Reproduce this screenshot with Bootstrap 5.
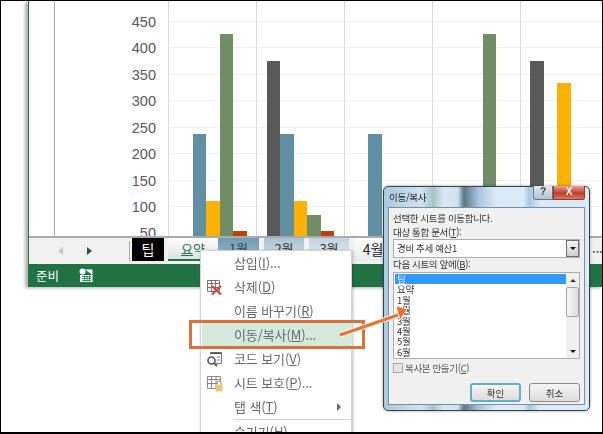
<!DOCTYPE html>
<html lang="ko">
<head>
<meta charset="utf-8">
<title>이동/복사</title>
<link href="https://cdn.jsdelivr.net/npm/bootstrap@5.3.0/dist/css/bootstrap.min.css" rel="stylesheet">
<style>
html,body{margin:0;background:#fff;}
body{font-family:"Noto Sans CJK KR","Liberation Sans",sans-serif;}
.stage{position:relative;width:603px;height:434px;overflow:hidden;background:#fff;}
.frame-line{position:absolute;inset:0;border:1px solid #000;border-bottom-width:2px;pointer-events:none;z-index:9;}
/* excel */
.xl{position:absolute;left:28px;top:1px;right:0;height:286px;border-left:1px solid #217346;box-shadow:-3px 1px 3px rgba(0,0,0,.3);background:#fff;}
.xl-chart{display:block;height:235px;width:574px;}
.xl-tabs{height:28px;background:#f1f1f1;border-top:2px solid #ababab;padding-left:29px;}
.nav-arrow{width:0;height:0;border-top:4px solid transparent;border-bottom:4px solid transparent;}
.arrow-l{border-right:5px solid #c6c6c6;}
.arrow-r{border-left:5px solid #1d5b3c;margin-left:24px;}
.tab-sep{width:1px;height:20px;background:#ababab;margin-left:37px;margin-right:2px;}
.sheet{height:23px;font-size:13px;line-height:22px;text-align:center;flex:none;color:#333;}
.sheet-on{width:32px;background:#000;color:#fff;font-size:14px;margin-right:4px;}
.sheet-sum{width:50px;background:linear-gradient(#fff,#d9e4e2);color:#2c6e52;border-bottom:2px solid #217346;}
.sheet-m{width:40px;margin-right:5px;}
.sheet-a{width:41px;background:linear-gradient(#6f9bb3,#9dbccb);color:#27475a;}
.sheet-b{background:linear-gradient(#a9c4d0,#cfe0e6);}
.sheet-c{background:linear-gradient(#c3d6dd,#dfeaee);}
.sheet-d{background:linear-gradient(#fff,#e3ecef);width:38px;color:#222;font-size:14px;}
.xl-more{position:absolute;right:0;top:240px;font-size:13px;line-height:14px;color:#333;}
.xl-status{height:23px;background:#217346;color:#fff;font-size:12.500px;padding-left:7px;line-height:23px;}
.xl-status svg{margin-left:20px;}
/* menu */
.ctx{position:absolute;left:200px;top:250px;width:152px;height:190px;background:#fff;border:1px solid #d4d4d4;border-radius:0;padding:0;min-width:0;margin:0;box-shadow:1px 1px 3px rgba(0,0,0,.25);z-index:3;filter:blur(.25px);}
.ctx .dropdown-item{height:24px;padding:0 0 0 33px;line-height:24px;color:#6a6a6a;position:relative;font-size:13px;letter-spacing:-.1px;display:flex;align-items:center;}
.ctx .dropdown-item.hot{background:#d3eadd;margin:0 0 0 1px;padding-left:32px;height:24px;}
.ctx svg.mi{position:absolute;left:5px;top:4px;}
.ctx .dropdown-divider{margin:0 0 0 32px;border-color:#d4d4d4;opacity:1;}
.caret-r{position:absolute;right:10px;top:8px;width:0;height:0;border-top:4px solid transparent;border-bottom:4px solid transparent;border-left:4px solid #666;}
u{text-underline-offset:1px;}
/* dialog */
.dlg{position:absolute;left:383px;top:186px;width:207px;height:225px;border:1px solid #3a4046;border-radius:5px;z-index:4;padding:20px 4px 5px;background:linear-gradient(90deg,#a9c9de 0,#cfe3f1 18%,#a9c2c6 24%,#d6e8f4 29%,#cfe2f0 36%,#5e7688 39%,#a6c4dc 46%,#d9ebf8 55%,#d9ebf8 68%,#a8c6de 71%,#d9ebf8 76%);box-shadow:0 0 3px rgba(0,0,0,.4);filter:blur(.35px);}
.dlg-title{position:absolute;left:5px;top:3px;font-size:9.500px;letter-spacing:-.3px;line-height:15px;color:#222;}
.cap-btns{position:absolute;right:4px;top:-1px;height:14px;}
.cap{height:14px;border:1px solid #6b7680;border-top:0;font-size:10px;line-height:12px;text-align:center;font-family:"Liberation Sans",sans-serif;font-weight:700;}
.cap-help{width:20px;border-radius:0 0 0 3px;background:linear-gradient(#dfe8ee,#b6c4cf);color:#444;}
.cap-x{width:32px;border-radius:0 0 3px 0;background:linear-gradient(#e5a396,#c13d2c 55%,#d87a66);color:#fff;border-color:#8a3a2e;}
.dlg-body{height:198px;background:#f0f0f0;border:1px solid #7d8d99;padding:3px 4px 0;font-size:9.500px;letter-spacing:-.35px;line-height:14px;color:#333;}
.dlg-body p{margin:0;}
.dlg-body p.lbl-b{line-height:13px;margin-bottom:1px;}
.combo{height:19px;background:#fff;border:1px solid #adadad;padding:0 0 0 3px;line-height:17px;}
.combo-btn{width:13px;height:17px;margin-left:auto;background:linear-gradient(#f3f3f3,#cfcfcf);border:1px solid #707070;}
.tri-d{width:0;height:0;border-left:3px solid transparent;border-right:3px solid transparent;border-top:3px solid #111;}
.tri-u{width:0;height:0;border-left:3px solid transparent;border-right:3px solid transparent;border-bottom:3px solid #333;}
.sheet-list{height:87px;background:#fff;border:1px solid #adadad;padding:1px 0 0 1px;}
.sheet-list .list-group{flex:1;border-radius:0;}
.sheet-list .list-group-item{border:0;padding:0 0 0 2px;height:10.400px;line-height:10.400px;font-size:9.500px;background:transparent;color:#333;border-radius:0;}
.sheet-list .list-group-item.active{background:#3399ff;color:#dcefff;}
.sbar{width:13px;background:#f0f0f0;margin-top:-1px;}
.sb-end{height:14px;}
.sb-thumb{height:30px;background:linear-gradient(90deg,#f7f7f7,#dcdcdc);border:1px solid #a5a5a5;border-radius:2px;}
.sb-track{flex:1;}
.copy-row{height:17px;color:#555;margin-bottom:7px;}
.copy-box{width:10px;height:10px;border:1px solid #aaa;background:#e6e6e6;margin-right:2px;}
.dlg-btn{width:51px;height:19px;padding:0;font-size:9.500px;line-height:16px;border-radius:3px;border:1px solid #8a8a8a;background:linear-gradient(#f5f5f5,#dcdcdc);color:#333;}
.dlg-btn.is-def{border:2px solid #5eb0cf;line-height:14px;}
.annot{position:absolute;left:0;top:0;width:603px;height:434px;z-index:5;pointer-events:none;}
</style>
</head>
<body>
<div class="stage">
  <div class="xl d-flex flex-column">
    <svg class="xl-chart" viewBox="29 1 574 235" font-family="Liberation Sans" font-size="14.5" fill="#595959">
      <line x1="54.5" y1="0" x2="54.5" y2="236" stroke="#a8a8a8"/>
      <g stroke="#f1f1f1"><path d="M169 21.5H603M169 47.5H603M169 74.5H603M169 100.5H603M169 127.5H603M169 153.5H603M169 180.5H603M169 206.5H603"/></g>
      <g stroke="#d9d9d9"><path d="M168.5 0V236M256.5 0V236M344.5 0V236M432.5 0V236M520.5 0V236"/></g>
      <g text-anchor="end"><text x="156" y="27">450</text><text x="156" y="53">400</text><text x="156" y="80">350</text><text x="156" y="106">300</text><text x="156" y="133">250</text><text x="156" y="159">200</text><text x="156" y="186">150</text><text x="156" y="212">100</text><text x="156" y="238">50</text></g>
      <g fill="#6190a5"><rect x="193" y="134" width="13" height="102"/><rect x="280" y="134" width="14" height="102"/><rect x="368" y="134" width="14" height="102"/></g>
      <g fill="#fbb204"><rect x="206" y="201" width="14" height="35"/><rect x="294" y="201" width="13" height="35"/><rect x="557" y="83" width="14" height="153"/></g>
      <g fill="#6f8e66"><rect x="220" y="34" width="13" height="202"/><rect x="307" y="215" width="14" height="21"/><rect x="483" y="34" width="13" height="202"/></g>
      <g fill="#bd4013"><rect x="233" y="231" width="14" height="5"/><rect x="321" y="231" width="13" height="5"/></g>
      <g fill="#595959"><rect x="267" y="61" width="13" height="175"/><rect x="530" y="61" width="14" height="175"/></g>
    </svg>
    <div class="xl-tabs d-flex align-items-start">
      <div class="nav-arrow arrow-l align-self-center"></div>
      <div class="nav-arrow arrow-r align-self-center"></div>
      <div class="tab-sep align-self-center"></div>
      <div class="sheet sheet-on">팁</div>
      <div class="sheet sheet-sum"><u>요</u>약</div>
      <div class="sheet sheet-m sheet-a">1월</div>
      <div class="sheet sheet-m sheet-b">2월</div>
      <div class="sheet sheet-m sheet-c">3월</div>
      <div class="sheet sheet-d">4월</div>
    </div>
    <div class="xl-more">...</div>
    <div class="xl-status d-flex align-items-center">
      <span>준비</span>
      <svg width="14" height="15" viewBox="0 0 14 15"><circle cx="3.5" cy="3.5" r="3" fill="#fff"/><path d="M6 1.5h7.5V14H1V7h12.500" fill="#fff"/><path d="M3 8.500h9M3 10.500h9M3 12.500h9M5.500 7.500v6M8 7.500v6M10.500 7.500v6" stroke="#217346" stroke-width=".8"/></svg>
    </div>
  </div>

  <div class="dropdown-menu show ctx">
    <a class="dropdown-item" href="#">삽입(<u>I</u>)...</a>
    <a class="dropdown-item" href="#"><svg class="mi" width="17" height="17" viewBox="0 0 17 17"><path d="M1.500 1.500h12v11h-12zM1.500 4.500h12M1.500 8.500h12M5.500 1.500v11M9.500 1.500v11" fill="none" stroke="#777"/><path d="M6 7l9 8.500M15 7l-9 8.500" stroke="#cf4b3a" stroke-width="2.400"/></svg>삭제(<u>D</u>)</a>
    <a class="dropdown-item" href="#">이름 바꾸기(<u>R</u>)</a>
    <a class="dropdown-item hot" href="#">이동/복사(<u>M</u>)...</a>
    <a class="dropdown-item" href="#"><svg class="mi" width="17" height="16" viewBox="0 0 17 16"><path d="M4.500 1.500h11v11h-6" fill="none" stroke="#777"/><path d="M4 1.500h11.500v1.500H4z" fill="#555"/><path d="M11 6h3M11 9h3" stroke="#888"/><circle cx="5.500" cy="9.500" r="3.500" fill="#fff" stroke="#4a5a68" stroke-width="1.600"/><path d="M8 12l3 3" stroke="#4a5a68" stroke-width="2"/></svg>코드 보기(<u>V</u>)</a>
    <a class="dropdown-item" href="#"><svg class="mi" width="17" height="17" viewBox="0 0 17 17"><path d="M1.500 1.500h13v12h-13zM1.500 4.500h13M1.500 8.500h13M5.500 1.500v12M10 1.500v12" fill="none" stroke="#888"/><rect x="9.500" y="9.500" width="7" height="7" fill="#e9c673"/><path d="M11 9.500V8a2 2 0 0 1 4 0v1.500" fill="#fff" stroke="#a98b4c"/></svg>시트 보호(<u>P</u>)...</a>
    <a class="dropdown-item" href="#">탭 색(<u>T</u>)<span class="caret-r"></span></a>
    <hr class="dropdown-divider">
    <a class="dropdown-item" href="#">숨기기(<u>H</u>)</a>
  </div>

  <div class="dlg">
    <div class="dlg-title">이동/복사</div>
    <div class="cap-btns d-flex"><div class="cap cap-help">?</div><div class="cap cap-x">X</div></div>
    <div class="dlg-body">
      <p>선택한 시트를 이동합니다.</p>
      <p>대상 통합 문서(<u>T</u>):</p>
      <div class="combo d-flex align-items-center">경비 추세 예산1<div class="combo-btn d-flex align-items-center justify-content-center"><div class="tri-d"></div></div></div>
      <p class="lbl-b">다음 시트의 앞에(<u>B</u>):</p>
      <div class="sheet-list d-flex">
        <div class="list-group">
          <div class="list-group-item active">팁</div>
          <div class="list-group-item">요약</div>
          <div class="list-group-item">1월</div>
          <div class="list-group-item">2월</div>
          <div class="list-group-item">3월</div>
          <div class="list-group-item">4월</div>
          <div class="list-group-item">5월</div>
          <div class="list-group-item">6월</div>
        </div>
        <div class="sbar d-flex flex-column">
          <div class="sb-end d-flex align-items-center justify-content-center"><div class="tri-u"></div></div>
          <div class="sb-thumb"></div>
          <div class="sb-track"></div>
          <div class="sb-end d-flex align-items-center justify-content-center"><div class="tri-d"></div></div>
        </div>
      </div>
      <div class="copy-row d-flex align-items-center"><div class="copy-box"></div>복사본 만들기(<u>C</u>)</div>
      <div class="d-flex justify-content-end gap-2">
        <button type="button" class="btn dlg-btn is-def">확인</button>
        <button type="button" class="btn dlg-btn">취소</button>
      </div>
    </div>
  </div>

  <svg class="annot" viewBox="0 0 603 434">
    <rect x="190.500" y="321.500" width="173" height="26" fill="none" stroke="#d9733b" stroke-width="3"/>
    <path d="M340 335L398 315" stroke="#fff" stroke-width="5"/>
    <path d="M340 335L398 315" stroke="#e8722c" stroke-width="3"/>
    <path d="M407 309L396 306L400 320Z" fill="#e8722c" stroke="#fff" stroke-width=".6"/>
  </svg>
  <div class="frame-line"></div>
</div>
<script src="https://cdn.jsdelivr.net/npm/bootstrap@5.3.0/dist/js/bootstrap.bundle.min.js"></script>
</body>
</html>
